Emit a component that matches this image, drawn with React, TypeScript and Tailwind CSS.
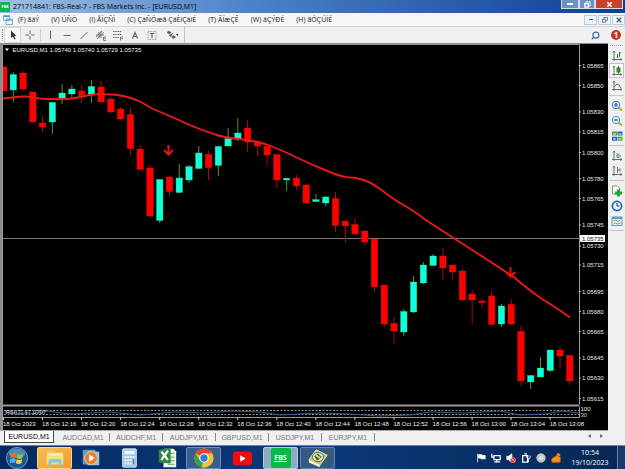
import type { ReactNode } from "react";
import { Search } from "lucide-react";

type Candle = [open: number, close: number, high: number, low: number, up: boolean];

const candles: Candle[] = [
  [74.5, 90, 72, 102, true], [73, 89, 71, 90, false], [92, 122, 92, 123, false], [123, 127, 116, 132, false],
  [102.5, 122, 102, 134, true], [93, 98.5, 84, 104, true], [89, 94, 85, 98, true], [91, 95.5, 85, 103, false],
  [86.5, 95, 80, 103, true], [87, 102, 81, 102, false], [99, 112, 97, 113, false], [109, 119, 107, 120, false],
  [114.5, 148.5, 107, 155, false], [149, 169.5, 145, 170, false], [168, 216, 165, 217, false], [179.5, 220.5, 179, 223, true],
  [177, 191.5, 176, 196, false], [178, 192.5, 164, 193, true], [166.5, 180, 165, 183, true], [153, 168.5, 146, 169, true],
  [154.5, 167.5, 151, 180, false], [146.5, 165.5, 146, 176, true], [138.5, 146, 128, 146, true], [133, 139, 118, 141, true],
  [128, 142, 120, 152, false], [141.5, 146, 140, 156, false], [146.5, 155, 146, 166, false], [154.5, 180, 154, 188, false],
  [178.3, 180, 178, 191, true], [178, 186, 175, 190, false], [185, 203, 184, 204, false], [199.7, 201.5, 194, 202, true],
  [197, 203, 196, 206, true], [198.5, 225.5, 192, 232, false], [221, 226, 221, 243, false], [224.5, 234, 218, 234, false],
  [231, 242, 231, 246, false], [239, 287, 239, 292, false], [285, 324, 285, 327, false], [323.5, 331, 317, 344, false],
  [311.5, 332, 309, 336, true], [282, 312, 276, 313, true], [265, 283, 262, 284, true], [256, 265.5, 254, 266, true],
  [256, 268, 248, 280, false], [265, 272, 265, 279, false], [271, 300, 269, 300, false], [294, 300, 290, 324, false],
  [301, 302.6, 298, 308, false], [296, 324.5, 291, 325, false], [306, 324, 304, 327, true], [304.5, 324, 299, 325, false],
  [331.5, 381, 326, 386, false], [375.5, 382, 375, 389, true], [368, 377, 357, 377, true], [350, 370.5, 350, 372, true],
  [350, 356, 347, 368, false], [355.5, 381, 355, 385, false],
];

const prices: [string, number][] = [
  ["1.05865", 65.5], ["1.05850", 85.5], ["1.05830", 112], ["1.05815", 132], ["1.05800", 152.5], ["1.05780", 178.5],
  ["1.05765", 198.5], ["1.05745", 225], ["1.05730", 246], ["1.05715", 265], ["1.05695", 291.5], ["1.05680", 311.5],
  ["1.05665", 331.5], ["1.05645", 358], ["1.05630", 378], ["1.05615", 398.5],
];

const times = ["18 Oct 2023", "18 Oct 12:16", "18 Oct 12:20", "18 Oct 12:24", "18 Oct 12:28", "18 Oct 12:32", "18 Oct 12:36",
  "18 Oct 12:40", "18 Oct 12:44", "18 Oct 12:48", "18 Oct 12:52", "18 Oct 12:56", "18 Oct 13:00", "18 Oct 13:04", "18 Oct 13:08"];

const menus = ["(F) ãáÝ", "(V) ÚÑÖ", "(I) ÅÏÇÑÌ", "(C) ÇáÑÓæã ÇáÈíÇäíÉ", "(T) ÃÏæÇÊ", "(W) äÇÝÐÉ", "(H) ãÓÇÚÏÉ"];
const tabs = ["EURUSD,M1", "AUDCAD,M1", "AUDCHF,M1", "AUDJPY,M1", "GBPUSD,M1", "USDJPY,M1", "EURJPY,M1"];

function SignalArrow({ x, y }: { x: number; y: number }) {
  return <path d={`M${x} ${y}v9M${x - 4.5} ${y + 5}l4.5 4.5 4.5-4.5`} fill="none" stroke="#f01010" strokeWidth="2" />;
}

function Chart() {
  return (
    <svg viewBox="0 43 608 388" className="h-full w-full bg-black font-['Liberation_Sans',sans-serif] text-[6px]" role="img" aria-label="EURUSD one minute chart">
      <path d="M0 43H608V44H2V431H0Z" fill="#8c8c88" />
      <path d="M0 430.5H608" stroke="#a8a8a8" />
      <g fill="none" stroke="#9a9a9a" strokeWidth="1">
        <path d="M3 44.5H579.5V404.5" />
        <path d="M2.5 44V430" />
        <path d="M3 405.5H579.5" strokeWidth="2" />
        <path d="M3 417.5H579.5V407" />
        <path d="M3 238.5H580" stroke="#777" />
      </g>
      <rect x="3" y="66.5" width="4" height="24.5" fill="#fe0000" />
      {candles.map(([top, bottom, high, low, up], i) => {
        const x = 13.3 + i * 9.763;
        return (
          <g key={i}>
            <path d={`M${x} ${high}V${low}`} stroke={up ? "#4f9c28" : "#a80c0c"} />
            <rect x={x - 3.2} y={top} width="6.4" height={bottom - top} fill={up ? "#10ffe0" : "#fe0000"} stroke={up ? "#30e060" : "#fe0000"} strokeWidth=".4" />
          </g>
        );
      })}
      <path
        d="M3 98.5C12 97.5 18 96.300 26 96.500S38 99 44 99H65C74 99 80 97 87 95.500C97 93.500 107 94 115 94.800C124 96 133 98.500 140 101.500L152 108.500 180 120.500C190 126 205 131 215 134.500C228 139 240 138.500 250 140.500C258 142 265 143.500 272 146.500L285 152 315 166 330 172C340 176 345 177.500 356 178C366 180 375 185 380 189C388 195 393 199 400 203C409 208 417 213 425 219.500L455 239 480 255 503 270 515 278C525 287 532 292 542 299C552 305 560 310 570 317.500"
        fill="none" stroke="#ee1818" strokeWidth="1.900" />
      <SignalArrow x={168.5} y={145} />
      <SignalArrow x={510.5} y={267} />
      <path d="M5 48.500h4l-2 2.500z" fill="#fff" />
      <text x="12.500" y="52" fill="#f4f4f4">EURUSD,M1</text>
      <text x="49.500" y="52" fill="#f4f4f4">1.05740 1.05740 1.05729 1.05735</text>
      {prices.map(([label, y]) => (
        <g key={label}>
          <path d={`M579 ${y}h2`} stroke="#bbb" />
          <text x="582" y={y + 2} fill="#e8e8e8">{label}</text>
        </g>
      ))}
      <rect x="580" y="235" width="25" height="7" fill="#fff" />
      <text x="582" y="240.500" fill="#111">1.05735</text>
      <g fill="none">
        <path d="M4 410.500H579M4 414.500H579" stroke="#b5b5b5" strokeWidth=".8" strokeDasharray="2 1.500" />
        <path d="M4 412L30 414 48 411 70 414 110 412 140 415 175 412 205 413 232 411 260 412 280 415 320 413 350 414 378 416 410 415 430 412 465 413 500 411 520 415 545 414 562 411 579 413" stroke="#365f9c" />
      </g>
      <text x="5.500" y="414" fill="#ddd">RSI(7) 47.0707</text>
      <text x="580.500" y="411" fill="#eee">100</text>
      <text x="580.500" y="417" fill="#ccc">30</text>
      {times.map((time, i) => (
        <g key={time}>
          <path d={`M${3.5 + i * 39.05} 417v3`} stroke="#ccc" />
          <text x={3 + i * 39.05} y="426" fill="#f2f2f2">{time}</text>
        </g>
      ))}
    </svg>
  );
}

function Tool({ label, active, wide, children }: { label: string; active?: boolean; wide?: boolean; children: ReactNode }) {
  return (
    <button aria-label={label} className={`flex h-4 items-center justify-center ${wide ? "w-6" : "w-[17px]"} ${active ? "border border-[#d8d8d8] bg-[#f8f8f8]" : ""}`}>
      <svg viewBox="0 0 12 12" className="h-3 w-3" fill="none" stroke="#666">{children}</svg>
    </button>
  );
}

function TopTools() {
  return (
    <div className="flex h-[17px] shrink-0 items-center border-t border-[#d4d4d4] bg-[#f0f0f0]">
      <span className="ml-[2px] mr-px h-3 border-l border-dotted border-[#999]" />
      <Tool label="Cursor" active><path d="M4 1.500V9l2-1.500L7.300 10.500l1.200-.5L7.300 7H9.500Z" fill="#333" stroke="none" /></Tool>
      <Tool label="Crosshair"><path d="M6 1.500v3.500M6 7v3.500M1.500 6H5M7 6h3.500" /></Tool>
      <span className="ml-[2px] h-3 border-l border-[#ccc]" />
      <Tool label="Vertical line"><path d="M6.500 2v8" /></Tool>
      <Tool label="Horizontal line"><path d="M2.500 6.500h7" /></Tool>
      <Tool label="Trendline"><path d="M2.500 10 9.500 3" /></Tool>
      <Tool label="Channel"><path d="m1 8 6-6M2 10l7-7M4 3v6M6 2v7M1 6h8M8.500 8v3.500M8.500 8H11M8.500 9.700H11M8.500 11.500H11" strokeWidth=".8" /></Tool>
      <Tool label="Fibonacci"><path d="M1 2.500h9M1 5.500h9M1 8.500h6" strokeDasharray="1.500 .7" /><path d="M8.500 8v3.500M8.500 8H11M8.500 9.700H11" strokeWidth=".8" /></Tool>
      <Tool label="Text"><path d="m3.500 9.500 2.500-6L8.500 9.500M4.500 7.500H7.500" strokeWidth="1.200" /></Tool>
      <Tool label="Text label"><rect x="2" y="2.500" width="8" height="8" stroke="#999" strokeDasharray="1 .6" /><path d="M3.800 4.500h4.500M6 4.500V9" strokeWidth="1.200" /></Tool>
      <Tool label="Arrows" wide><path d="M1 3.500 3 2l2 1.500L3.500 5ZM5.500 8l2-1.500 2 1.500-2 1.500ZM3 6l1.500 1.500L7 4" fill="#555" strokeWidth=".7" /><path d="M10 5h2.500L11.200 7Z" fill="#222" stroke="none" /></Tool>
      <span className="h-full border-l border-[#c4c4c4]" />
      <div className="ml-auto mr-1 flex items-center gap-[11px]">
        <button aria-label="Search"><Search className="h-[9px] w-[9px] -scale-x-100 text-[#3864b0]" strokeWidth={3} /></button>
        <button aria-label="Notifications" className="flex h-[10px] w-[10px] items-center justify-center rounded-full bg-[#d9301e] text-[8px] font-bold leading-none text-white">1</button>
      </div>
    </div>
  );
}

function SideTool({ label, active, children }: { label: string; active?: boolean; children: ReactNode }) {
  return (
    <button aria-label={label} className={`flex h-[15px] w-[15px] items-center justify-center ${active ? "border border-[#c9b6e4] bg-white" : ""}`}>
      <svg viewBox="0 0 12 12" className="h-3 w-3 shrink-0" fill="none" stroke="#667066">{children}</svg>
    </button>
  );
}

const axes = "M3 1v10M1 9.500h10M2 2.500 3 1l1 1.500M9.500 8.500l1.500 1-1.500 1";

function SideTools() {
  const line = <hr className="mb-[2px] mt-[2px] w-[15px] border-[#c6c6c6]" />;
  return (
    <aside className="flex w-[17px] shrink-0 flex-col items-center bg-[#f0f0f0] pt-[2px]">
      <hr className="mb-[2px] w-[13px] border-dotted border-[#aaa]" />
      <SideTool label="Bar chart"><path d={axes} /><path d="M6.500 4v4M8.500 2v5M8.500 3H10" stroke="#2c8a2c" /></SideTool>
      <SideTool label="Candlesticks" active><path d={axes} /><path d="M7.500 1v8" stroke="#188a28" /><rect x="6" y="3" width="3" height="4" fill="#20a030" stroke="#188a28" /></SideTool>
      <SideTool label="Line chart"><path d={axes} /><path d="M3 7 6 4q2 0 4 4" stroke="#3b8f4c" /></SideTool>
      {line}
      <SideTool label="Zoom in"><path d="m7.500 7.500 3.500 3" stroke="#d0a420" strokeWidth="2.200" /><circle cx="5" cy="5" r="3.700" fill="#ddf0ff" stroke="#3a80c0" /><path d="M3 5h4M5 3v4" stroke="#2568b0" strokeWidth="1.200" /></SideTool>
      <SideTool label="Zoom out"><path d="m7.500 7.500 3.500 3" stroke="#d0a420" strokeWidth="2.200" /><circle cx="5" cy="5" r="3.700" fill="#ddf0ff" stroke="#5598c8" /><path d="M3 5h4" stroke="#2568b0" strokeWidth="1.200" /></SideTool>
      <SideTool label="Tile windows"><path d="M1 1.500h5v4H1Zm5.500 5.300h5v4h-5Z" fill="#41a82e" stroke="none" /><path d="M6.500 1.500h5v4h-5ZM1 6.800h5v4H1Z" fill="#2860b8" stroke="none" /><path d="M2 4h3M7.500 4h3M2 9h3M7.500 9h3" stroke="#e8fff0" strokeWidth="1.200" /></SideTool>
      {line}
      <SideTool label="Auto scroll"><path d={axes} /><path d="M6 3v5M7 4l3 2-3 2Z" stroke="#388a58" strokeWidth=".8" /></SideTool>
      <SideTool label="Chart shift"><path d={axes} /><path d="M6.500 2v6M10 5H7.500M9 3.500 7.500 5 9 6.500" stroke="#777" /></SideTool>
      {line}
      <SideTool label="Indicators"><path d="M1.500 1h5l2 2v6h-7Z" fill="#fff" stroke="#72a072" /><path d="M7.500 4.500v7M4 8h7" stroke="#1ca52c" strokeWidth="2.800" /></SideTool>
      <SideTool label="Periods"><circle cx="6" cy="6" r="4.600" fill="#e8f5ff" stroke="#2064b8" strokeWidth="1.700" /><path d="M6 3v3h2.500" stroke="#234" /></SideTool>
      <SideTool label="Templates"><rect x="1" y="2" width="10" height="8.500" fill="#e7f4e9" stroke="#6a9cc4" /><path d="M1 3h10" stroke="#4888bd" strokeWidth="1.500" /><path d="m2.500 6 2-1 2 1.500 3-1.500M2.500 9l2-1 2 1 3-1" stroke="#4c9866" strokeWidth=".8" /></SideTool>
      {line}
    </aside>
  );
}

function TaskButton({ label, look, children }: { label: string; look: string; children: ReactNode }) {
  return (
    <button aria-label={label} className={`flex h-[22px] shrink-0 items-center justify-center ${look}`}>
      <svg viewBox="0 0 24 24" className="h-[22px] w-[22px]">{children}</svg>
    </button>
  );
}

function Tray({ label, children }: { label: string; children: ReactNode }) {
  return <button aria-label={label} className="shrink-0"><svg viewBox="0 0 12 12" className="h-[10px] w-[10px]" fill="none" stroke="#fff">{children}</svg></button>;
}

function Taskbar() {
  const flat = "w-[38px]";
  return (
    <footer className="flex h-6 shrink-0 items-center overflow-hidden border-t border-[#6683a8] bg-linear-to-r from-[#062a60] via-[#0a3a7c] to-[#082754]">
      <TaskButton label="Start" look="w-[34px]">
        <circle cx="12" cy="12" r="11.500" fill="#1b588c" stroke="#71a7c8" />
        <ellipse cx="12" cy="7" rx="9" ry="5" fill="#78aed0" opacity=".6" />
        <path d="M5.500 7.500q3-1.800 6 0l-.7 4.500q-3-1.500-6 .2Z" fill="#ef6a35" />
        <path d="M12.500 7.800q3 1.500 6 0l-.8 4.500q-3 1.400-6 0Z" fill="#8fcb42" />
        <path d="M4.700 13.200q3-1.700 6 0l-.7 4.300q-2.800-1.500-5.800.2Z" fill="#4ab2ee" />
        <path d="M11.600 13.400q3 1.500 6 0l-.8 4.400q-3 1.400-6 0Z" fill="#fdcc38" />
      </TaskButton>
      <TaskButton label="Explorer" look="ml-[3px] w-[35px] rounded-xs border border-[#f8d890] bg-linear-to-br from-[#f4bd58] to-[#f39b22]">
        <path d="M3 4h8l2 2h8v13H3Z" fill="#eacb68" /><path d="M4 7h16v9H4Z" fill="#fff2ac" /><path d="M3 9h18v10H3Z" fill="#f7df83" /><path d="M5 21v-6q0-2 2-2h10q2 0 2 2v6h-3v-4H8v4Z" fill="#83c8e8" />
      </TaskButton>
      <TaskButton label="Media Player" look={flat}>
        <rect x="3" y="3" width="14" height="16" rx="1" fill="#4f9ed4" /><rect x="8" y="5" width="13" height="15" rx="1" fill="#8bc4e8" /><circle cx="12" cy="12" r="7" fill="#ef7e24" stroke="#f9c698" /><path d="m10 8 6 4-6 4Z" fill="#fff" />
      </TaskButton>
      <TaskButton label="Calculator" look={flat}>
        <rect x="5" y="2" width="15" height="20" rx="1" fill="#9fc7e4" stroke="#d6e8f4" /><rect x="7" y="4" width="11" height="4" fill="#e7f4fa" />
        <path d="M7 11h11M7 14.500h11M7 18h11" stroke="#eff8ff" strokeWidth="2.200" strokeDasharray="2 1" /><path d="M16 13h2v6h-2Z" fill="#4b87b4" />
      </TaskButton>
      <TaskButton label="Excel" look={flat}>
        <path d="M9 2h10l3 3v17H8Z" fill="#eef7eb" /><path d="M13 7h7M13 11h7M13 15h7M13 19h7" stroke="#7dbb73" strokeWidth="1.500" /><path d="M3 3 16 1v17L3 17Z" fill="#318744" /><path d="m6 5 7 9M13 4 6 14" stroke="#fff" strokeWidth="2.400" />
      </TaskButton>
      <TaskButton label="Chrome" look="w-[35px] rounded-xs border border-[#6f8fb3] bg-[#385f8f]">
        <circle cx="12" cy="12" r="10.500" fill="#f3c22e" /><path d="M12 12 2.900 6.800A10.500 10.500 0 0 1 21.100 6.800H12Z" fill="#e5432f" /><path d="M12 12 9.500 22A10.500 10.500 0 0 1 2.900 6.800L7.500 14.500Z" fill="#2da451" /><circle cx="12" cy="12" r="5.200" fill="#fff" /><circle cx="12" cy="12" r="4" fill="#3978e2" />
      </TaskButton>
      <TaskButton label="YouTube" look="ml-[2px] w-[38px]">
        <rect x="2" y="5" width="21" height="15" rx="4" fill="#f20c12" /><path d="m10 9 6 3.500-6 3.500Z" fill="#fff" />
      </TaskButton>
      <button aria-label="FBS" className="ml-[2px] flex h-[22px] w-[35px] shrink-0 items-center justify-center rounded-xs border border-[#b9ccdc] bg-[#8fabc0]">
        <span className="flex h-5 w-5 items-center justify-center rounded-xs bg-[#08b848] text-[7px] font-bold leading-none text-white underline">FBS</span>
      </button>
      <TaskButton label="MetaEditor" look="ml-[2px] w-[35px] rounded-xs border border-[#6482a4] bg-[#345a83]">
        <path d="m2 14 8-11 12 6-8 11Z" fill="#d8c23b" stroke="#f1eaa4" /><path d="m2 14 12 6v2L2 17Z" fill="#f7f6e2" /><ellipse cx="12" cy="11" rx="6" ry="5" fill="#dceaf0" stroke="#467" /><path d="m8 10 4-3 4 4-5 4Z" fill="#365f35" /><path d="m10 9 4 3" stroke="#f2de43" strokeWidth="2" />
      </TaskButton>
      <div className="ml-auto flex items-center gap-[5px] pr-[10px]">
        <Tray label="Action Center"><path d="M2 1v10" /><path d="M3 2h4v1h4v4H6V6H3Z" fill="#fff" /></Tray>
        <Tray label="Network"><path d="M3.500 3H11v5H3.500ZM7 8v3M4 10.500h7M1 1v4h2" strokeWidth="1.500" /></Tray>
        <Tray label="Volume"><path d="M1 4h2l4-3v10L3 8H1Z" fill="#fff" /><circle cx="8.500" cy="8.500" r="3" fill="#df3033" stroke="#f28080" /><path d="m6.500 6.500 4 4" /></Tray>
        <Tray label="Power"><path d="M2 3h6v8H2ZM4 1h3" strokeWidth="1.500" /><path d="M7 3v3q2 2 4 0V3M9 7v4" /></Tray>
        <Tray label="Disc"><circle cx="6" cy="6" r="5" fill="#b7bdc2" stroke="#dce1e5" /><path d="M6 3v6M4 5v3M8 4v4" /></Tray>
        <Tray label="Updates"><path d="M1 7 7 3l4 2v6H1Z" fill="#f09522" stroke="#d5690b" /><path d="M7 3V0l4 1v3Z" fill="#ee7f19" stroke="none" /></Tray>
      </div>
      <div className="w-[38px] shrink-0 text-center text-[7px] leading-[10px] text-white"><div>10:54</div><div>19/10/2023</div></div>
      <button aria-label="Show desktop" className="ml-2 h-full w-2 shrink-0 border-l border-[#6b86a6] bg-[#173b66]" />
    </footer>
  );
}

export default function App() {
  const caption = "flex h-[9px] items-center justify-center border border-t-0 border-[#d2dfef]";
  const child = "flex h-[10px] w-[13px] items-center justify-center border border-[#b8cbe0] bg-[#edf4fc]";
  return (
    <div className="flex h-screen flex-col overflow-hidden bg-[#f0f0f0] font-['Open_Sans','Noto_Sans',sans-serif] text-[#222]">
      <header className="flex h-[13px] shrink-0 items-center bg-linear-to-r from-[#9fbfe4] via-[#4c82c8] via-40% to-[#0d3f91] text-[7px] leading-none">
        <span className="flex h-[10px] w-[10px] items-center justify-center bg-[#09b94c] text-[4px] font-bold text-white">FBS</span>
        <h1 className="ml-[3px] whitespace-nowrap text-black">271714841: FBS-Real-7 - FBS Markets Inc. - [EURUSD,M1]</h1>
        <div className="ml-auto mr-[2px] flex self-start">
          <button aria-label="Minimize" className={`${caption} w-[18px] bg-[#6c92c3]`}><span className="h-[2px] w-[6px] bg-white" /></button>
          <button aria-label="Restore" className={`${caption} w-[16px] bg-[#6c92c3]`}><svg viewBox="0 0 8 8" className="h-[7px] w-[7px]" fill="none" stroke="#fff"><path d="M2 2V1h5v5H6" /><path d="M1 3h4v4H1Z" strokeWidth="1.500" /></svg></button>
          <button aria-label="Close" className={`${caption} w-[28px] bg-[#c9412c]`}><svg viewBox="0 0 8 8" className="h-[7px] w-[7px]" stroke="#fff" strokeWidth="1.800"><path d="m1.500 1.500 5 5m0-5-5 5" /></svg></button>
        </div>
      </header>
      <nav className="flex h-[13px] shrink-0 items-center bg-[#f5f5f5] text-[7px] leading-none">
        <svg viewBox="0 0 10 10" className="ml-[3px] mr-[5px] h-[10px] w-[10px]" fill="#edf7ff" stroke="#79b0da"><path d="M.5.500h6v5h-6ZM3 4h6.500v5.500H3Z" /><path d="M3 5h6M1 1.500h5" stroke="#4e92cb" /></svg>
        <div className="flex gap-3">{menus.map((m) => <button key={m} className="whitespace-nowrap">{m}</button>)}</div>
        <div className="ml-auto flex gap-[1px]">
          <button aria-label="Minimize chart" className={child}><span className="h-px w-1 bg-[#456]" /></button>
          <button aria-label="Restore chart" className={child}><svg viewBox="0 0 8 8" className="h-[6px] w-[6px]" fill="none" stroke="#456"><path d="M2.500 2.500v-2h5v4H6M.5 3h4.500v4H.5Z" /></svg></button>
          <button aria-label="Close chart" className={child}><svg viewBox="0 0 8 8" className="h-[6px] w-[6px]" stroke="#456" strokeWidth="1.500"><path d="m1 1 6 6m0-6L1 7" /></svg></button>
        </div>
      </nav>
      <TopTools />
      <main className="flex min-h-0 flex-1">
        <div className="min-w-0 flex-1"><Chart /></div>
        <SideTools />
      </main>
      <div className="flex h-[14px] shrink-0 items-start pl-1 font-['Liberation_Sans',sans-serif] text-[7px] leading-none">
        {tabs.map((tab, i) => (
          <button key={tab} className={i === 0 ? "mr-[3px] h-3 w-[50px] border border-t-0 border-[#444] bg-white text-black" : "mt-[2px] h-2 w-[53px] border-r border-[#888] text-[#777]"}>{tab}</button>
        ))}
        <span className="ml-auto mr-[22px] mt-[3px] flex gap-[9px]">
          <button aria-label="Previous tab"><svg viewBox="0 0 4 6" className="h-1 w-[3px]"><path d="M4 0v6L0 3Z" fill="#555" /></svg></button>
          <button aria-label="Next tab"><svg viewBox="0 0 4 6" className="h-1 w-[3px]"><path d="M0 0v6l4-3Z" fill="#555" /></svg></button>
        </span>
      </div>
      <Taskbar />
    </div>
  );
}
